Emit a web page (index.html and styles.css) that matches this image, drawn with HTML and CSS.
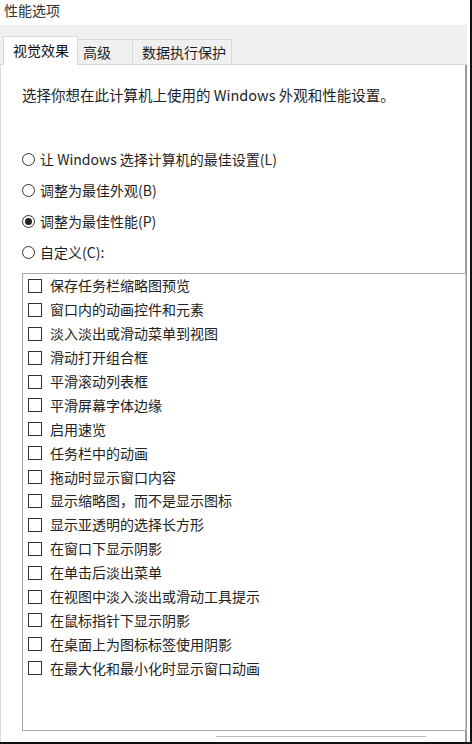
FILE: index.html
```html
<!DOCTYPE html>
<html>
<head>
<meta http-equiv="Content-Type" content="text/html; charset=utf-8"/>
<title>性能选项</title>
<link rel="stylesheet" href="styles.css">
</head>
<body>
<div class="window">
  <div class="title">性能选项</div>

  <div class="tabs">
    <div class="tab tab-active tab-1">视觉效果</div>
    <div class="tab tab-2">高级</div>
    <div class="tab tab-3">数据执行保护</div>
  </div>

  <div class="panel">
    <p class="intro">选择你想在此计算机上使用的 Windows 外观和性能设置。</p>

    <div class="radios">
      <div class="radio"><span class="dot"></span>让 Windows 选择计算机的最佳设置(L)</div>
      <div class="radio"><span class="dot"></span>调整为最佳外观(B)</div>
      <div class="radio"><span class="dot dot-on"></span>调整为最佳性能(P)</div>
      <div class="radio"><span class="dot"></span>自定义(C):</div>
    </div>

    <div class="list">
      <div class="item"><span class="box"></span>保存任务栏缩略图预览</div>
      <div class="item"><span class="box"></span>窗口内的动画控件和元素</div>
      <div class="item"><span class="box"></span>淡入淡出或滑动菜单到视图</div>
      <div class="item"><span class="box"></span>滑动打开组合框</div>
      <div class="item"><span class="box"></span>平滑滚动列表框</div>
      <div class="item"><span class="box"></span>平滑屏幕字体边缘</div>
      <div class="item"><span class="box"></span>启用速览</div>
      <div class="item"><span class="box"></span>任务栏中的动画</div>
      <div class="item"><span class="box"></span>拖动时显示窗口内容</div>
      <div class="item"><span class="box"></span>显示缩略图，而不是显示图标</div>
      <div class="item"><span class="box"></span>显示亚透明的选择长方形</div>
      <div class="item"><span class="box"></span>在窗口下显示阴影</div>
      <div class="item"><span class="box"></span>在单击后淡出菜单</div>
      <div class="item"><span class="box"></span>在视图中淡入淡出或滑动工具提示</div>
      <div class="item"><span class="box"></span>在鼠标指针下显示阴影</div>
      <div class="item"><span class="box"></span>在桌面上为图标标签使用阴影</div>
      <div class="item"><span class="box"></span>在最大化和最小化时显示窗口动画</div>
    </div>

    <div class="edge"></div>
  </div>
</div>
</body>
</html>
```

FILE: styles.css
```css
html, body {
   margin: 0;
   padding: 0;
   background-color: white;
}

body {
   font-family: "Noto Sans CJK SC", "Liberation Sans", sans-serif;
   font-size: 14px;
   color: #1e1e1e;
   width: 472px;
   height: 744px;
   overflow: hidden;
}

.window {
   width: 470px;
   height: 742px;
   border-right: 2px solid #111;
   border-bottom: 2px solid #111;
   overflow: hidden;
}

.title {
   height: 25px;
   padding-left: 4px;
   line-height: 20px;
   color: #333;
}

.tabs {
   width: 467px;
   height: 40px;
   box-sizing: border-box;
   background-color: #f0f0f0;
   border-bottom: 1px solid #d9d9d9;
   display: flex;
   align-items: flex-end;
   padding-left: 3px;
}

.tab {
   height: 25px;
   box-sizing: border-box;
   border: 1px solid #d9d9d9;
   border-bottom: none;
   border-left: none;
   line-height: 24px;
   padding-left: 6px;
}

.tab-1 {
   width: 75px;
   padding-left: 9px;
}

.tab-2 {
   width: 55px;
   padding-left: 5px;
}

.tab-3 {
   width: 99px;
   padding-left: 9px;
}

.tab-active {
   height: 29px;
   margin-bottom: -1px;
   background-color: white;
   border-left: 1px solid #d9d9d9;
   line-height: 26px;
   color: #111;
}

.panel {
   width: 467px;
   height: 677px;
   box-sizing: border-box;
   border-left: 1px solid #dcdcdc;
   border-right: 2px solid #9a9a9a;
   padding: 20px 0 0 21px;
}

.intro {
   margin: 0;
   line-height: 20px;
   font-size: 14.5px;
}

.radios {
   margin-top: 43px;
}

.radio {
   height: 31px;
   line-height: 22px;
   display: flex;
   align-items: flex-start;
}

.dot {
   width: 11px;
   height: 11px;
   border: 1px solid #333;
   border-radius: 50%;
   margin: 5px 5px 0 0;
   display: flex;
   align-items: center;
   justify-content: center;
   flex-shrink: 0;
}

.dot-on::after {
   content: "";
   width: 7px;
   height: 7px;
   border-radius: 50%;
   background-color: #222;
}

.list {
   width: 444px;
   height: 458px;
   box-sizing: border-box;
   margin-top: 1px;
   border: 1px solid #a8a8a8;
   border-right-color: #c8c8c8;
   padding: 0 0 0 5px;
   color: #222;
}

.item {
   height: 23.9px;
   line-height: 23px;
   display: flex;
   align-items: center;
}

.box {
   width: 12px;
   height: 12px;
   border: 1px solid #333;
   margin-right: 8px;
   flex-shrink: 0;
}

.edge {
   margin: 5px 0 0 194px;
   width: 210px;
   height: 1px;
   background-color: #bdbdbd;
}
```
